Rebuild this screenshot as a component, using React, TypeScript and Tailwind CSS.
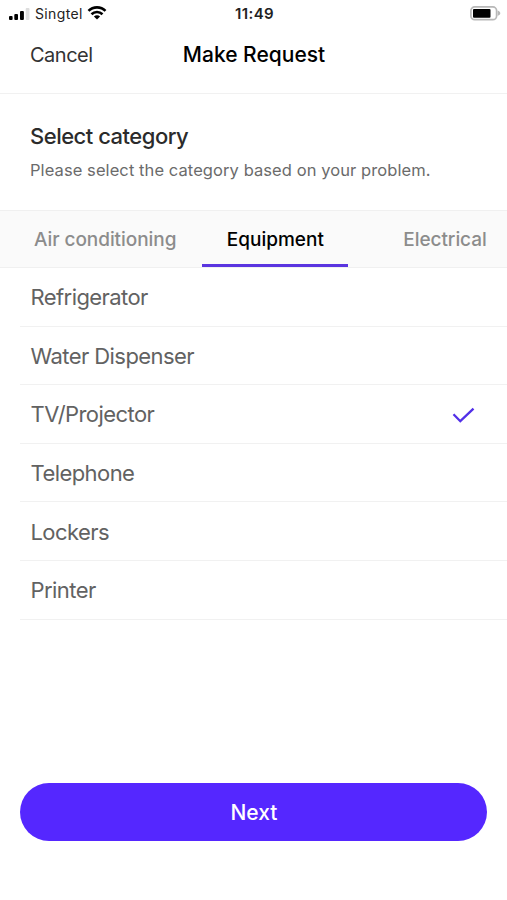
import React from 'react';

const tabs = [
  { label: 'Air conditioning', className: 'ml-[34px] w-[142px] tracking-[-0.06px]' },
  { label: 'Equipment', className: 'ml-[26.4px] w-[146px]' },
  { label: 'Electrical', className: 'ml-[54.6px] w-[84px] tracking-[-0.06px]' },
];

const categories = ['Refrigerator', 'Water Dispenser', 'TV/Projector', 'Telephone', 'Lockers', 'Printer'];

const SignalIcon: React.FC = () => (
  <svg width="22" height="14" viewBox="0 0 22 14">
    <rect x="0" y="9" width="3.6" height="4" rx="1" fill="#000" />
    <rect x="5.3" y="7" width="3.7" height="6" rx="1" fill="#000" />
    <rect x="11" y="4" width="3.9" height="9" rx="1" fill="#000" />
    <rect x="16.7" y="1" width="3.8" height="12" rx="1" fill="#ddd" />
  </svg>
);

const WifiIcon: React.FC = () => (
  <svg width="20" height="14" viewBox="0 0 20 14" fill="none" stroke="#000" strokeWidth="2.6">
    <path d="M1.5 4.9C6.2 0.2 13.8 0.2 18.5 4.9" />
    <path d="M4.5 8.3C7.6 5.3 12.4 5.3 15.5 8.3" />
    <path d="M10 13.5L6.900 10.500C8.700 8.900 11.300 8.900 13.100 10.500Z" fill="#000" stroke="none" />
  </svg>
);

const BatteryIcon: React.FC = () => (
  <svg width="31" height="15" viewBox="0 0 31 15">
    <rect x="0.9" y="0.9" width="25.7" height="12.8" rx="3.8" fill="#fff" stroke="#b8b8b8" strokeWidth="1.7" />
    <rect x="3" y="3" width="17.5" height="8.7" rx="1" fill="#000" />
    <path d="M27.6 4.6C31.2 6 31.2 8.6 27.6 10Z" fill="#b8b8b8" />
  </svg>
);

const StatusBar: React.FC = () => (
  <div className="grid h-7 grid-cols-3 items-center pl-[9px] pr-[6px] text-sm text-[#222]">
    <div className="flex items-center">
      <SignalIcon />
      <span className="ml-[4px] tracking-[0.35px]">Singtel</span>
      <span className="ml-[4px] mb-[2px]"><WifiIcon /></span>
    </div>
    <span className="pr-px text-center text-[15px] font-semibold tracking-[0.4px]">11:49</span>
    <div className="flex justify-end pb-[2px]">
      <BatteryIcon />
    </div>
  </div>
);

const App: React.FC = () => {
  const [activeTab, setActiveTab] = React.useState('Equipment');
  const [selected, setSelected] = React.useState('TV/Projector');

  return (
    <div className="flex h-[900px] w-[507px] flex-col overflow-hidden bg-white font-['Inter',sans-serif]">
      <StatusBar />

      {/* Header */}
      <header className="grid h-[66px] shrink-0 grid-cols-3 border-b border-[#f1f1f1] pt-[11px]">
        <button className="h-8 pl-[30px] text-left text-[20px] tracking-[-0.5px] text-[#333]">Cancel</button>
        <h1 className="h-8 whitespace-nowrap pl-px text-center text-[21px] leading-8 font-medium text-black">Make Request</h1>
      </header>

      {/* Intro */}
      <section className="h-[116px] shrink-0 pt-[26px] pl-[30px]">
        <h2 className="text-[22px] leading-8 font-medium tracking-[-0.5px] text-[#2b2b2b]">Select category</h2>
        <p className="mt-[6px] text-[16.5px] leading-6 tracking-[0.08px] text-[#6b6b6b]">
          Please select the category based on your problem.
        </p>
      </section>

      {/* Tabs */}
      <nav className="flex h-[58px] shrink-0 overflow-hidden border-y border-[#f0f0f0] bg-[#fafafa]">
        {tabs.map((tab) => (
          <button
            key={tab.label}
            onClick={() => setActiveTab(tab.label)}
            className={`shrink-0 whitespace-nowrap border-b-[3px] pt-[6px] text-[19px] font-medium ${tab.className} ${
              activeTab === tab.label ? 'border-[#5a35e0] text-black' : 'border-transparent text-[#8c8c8c]'
            }`}
          >
            {tab.label}
          </button>
        ))}
      </nav>

      {/* Categories */}
      <ul className="ml-5 shrink-0">
        {categories.map((category) => (
          <li key={category} className="h-[58.6px] border-b border-[#f1f1f1]">
            <button
              onClick={() => setSelected(category)}
              className="flex h-full w-full items-center justify-between pt-[2px] pl-[10.5px] pr-[32px] text-[22px] tracking-[-0.57px] text-[#626262]"
            >
              {category}
              {selected === category && (
                <svg width="23" height="16" viewBox="0 0 23 16" fill="none" stroke="#5230e8" strokeWidth="2.3">
                  <path d="M1.5 7.2L8.3 14.2L21.5 1.7" />
                </svg>
              )}
            </button>
          </li>
        ))}
      </ul>

      <button className="mr-[19.6px] ml-[20.4px] mt-auto mb-[59px] h-[58px] shrink-0 rounded-full bg-[#5527ff] pt-[2px] text-[21px] font-medium text-white">
        Next
      </button>
    </div>
  );
};

export default App;
